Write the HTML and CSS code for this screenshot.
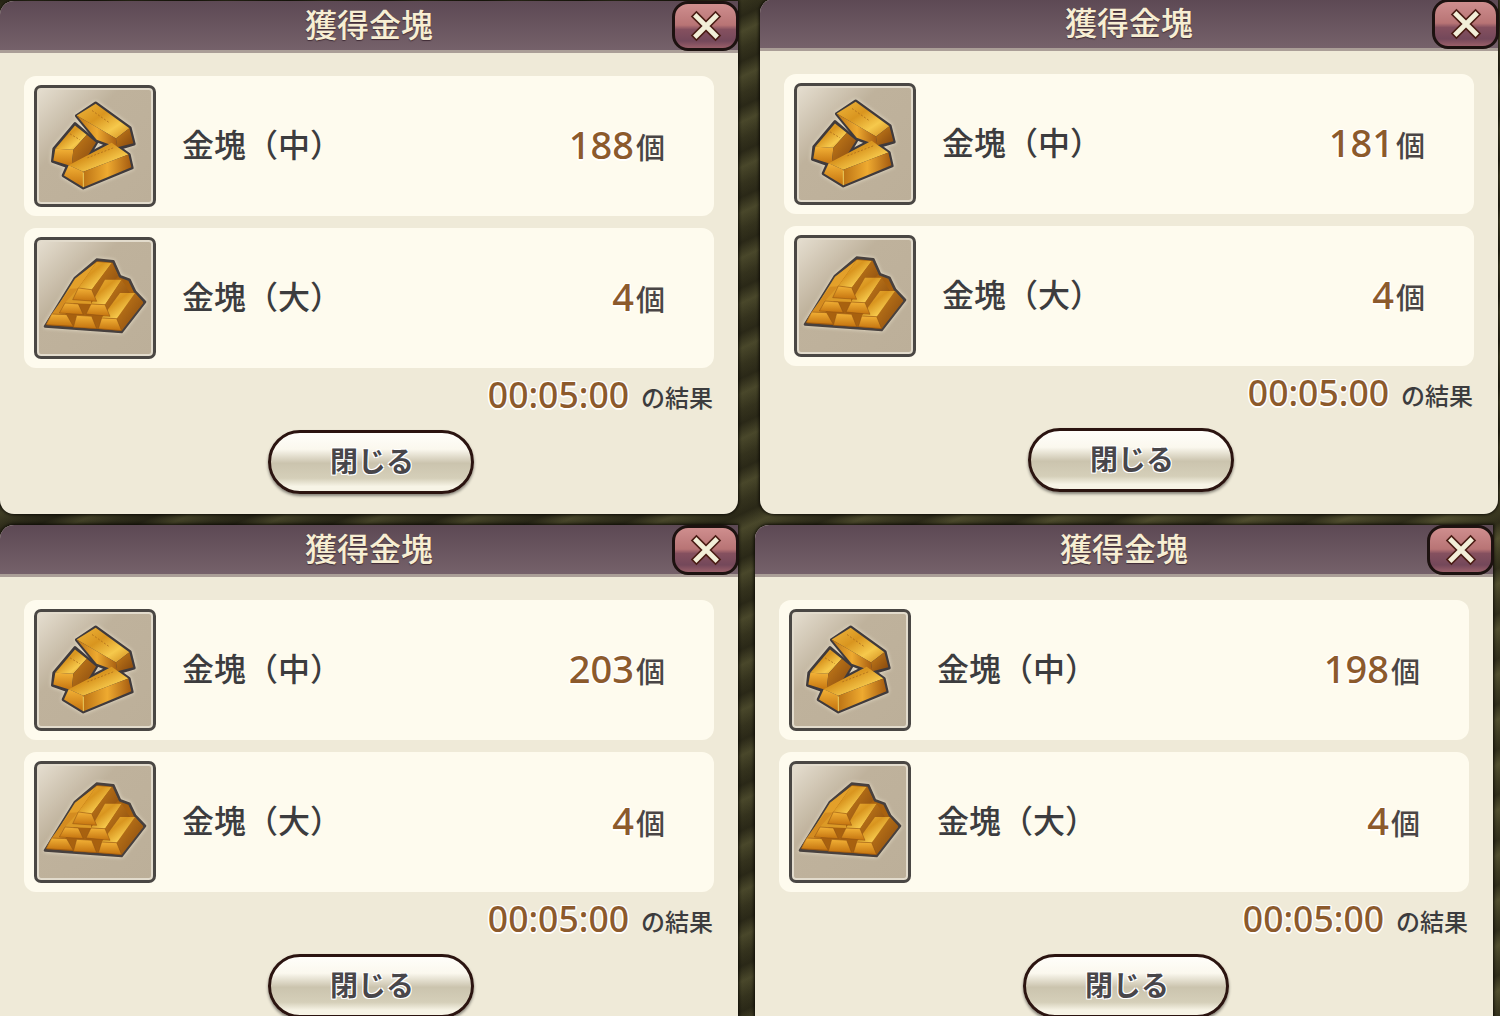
FILE: index.html
```html
<!DOCTYPE html>
<html lang="ja">
<head>
<meta charset="utf-8">
<title>獲得金塊</title>
<link rel="stylesheet" href="styles.css">
</head>
<body>
<svg class="defs" width="0" height="0" aria-hidden="true">
  <defs>
    <linearGradient id="gTop" x1="0" y1="0" x2="1" y2="1">
      <stop offset="0" stop-color="#efb63c"/><stop offset=".4" stop-color="#d9951f"/><stop offset=".7" stop-color="#f6c94c"/><stop offset="1" stop-color="#d08a1c"/>
    </linearGradient>
    <linearGradient id="gSide" x1="0" y1="0" x2="1" y2="0">
      <stop offset="0" stop-color="#bd7415"/><stop offset=".5" stop-color="#eeaa30"/><stop offset="1" stop-color="#a65c10"/>
    </linearGradient>
    <linearGradient id="gEnd" x1="0" y1="0" x2="0" y2="1">
      <stop offset="0" stop-color="#f2b136"/><stop offset="1" stop-color="#c4730f"/>
    </linearGradient>
    <linearGradient id="gDark" x1="0" y1="0" x2="1" y2="1">
      <stop offset="0" stop-color="#c87f1a"/><stop offset="1" stop-color="#84460e"/>
    </linearGradient>
    <symbol id="medium" viewBox="21 24 348 345">
      <g stroke-linejoin="round">
        <path d="M135 130 170 160 200 185 172 232 125 262 68 242 72 205Z" fill="#3f3a3c" stroke="#3f3a3c" stroke-width="10"/>
        <path d="M197 68 300 142 312 190 262 205 200 180 140 106Z" fill="#3f3a3c" stroke="#3f3a3c" stroke-width="10"/>
        <path d="M245 185 297 222 306 262 160 322 100 285 115 252Z" fill="#3f3a3c" stroke="#3f3a3c" stroke-width="10"/>
        <path d="M135 135 170 163 130 208 76 205Z" fill="url(#gTop)"/>
        <path d="M76 205 130 208 125 257 70 240Z" fill="url(#gEnd)"/>
        <path d="M170 163 198 186 172 228 125 257 130 208Z" fill="url(#gDark)"/>
        <path d="M197 70 298 143 258 174 140 105Z" fill="url(#gTop)"/>
        <path d="M140 105 258 174 262 200 200 178Z" fill="url(#gSide)"/>
        <path d="M298 143 310 188 262 200 258 174Z" fill="url(#gDark)"/>
        <path d="M245 187 295 222 160 274 116 254Z" fill="url(#gTop)"/>
        <path d="M116 254 160 274 160 320 102 285Z" fill="url(#gEnd)"/>
        <path d="M160 274 295 222 304 260 160 320Z" fill="url(#gSide)"/>
        <path d="M172 232 250 202M186 90 240 128M120 160 150 178" stroke="#a9691a" stroke-width="3" fill="none" stroke-dasharray="6 5" opacity=".75"/>
        <path d="M160 276V320" stroke="#ffe36b" stroke-width="2.5"/>
      </g>
    </symbol>
    <symbol id="large" viewBox="51 47 348 346">
      <g stroke-linejoin="round">
        <path d="M230 105 280 110 300 155 328 165 345 200 375 232 305 322 75 305 165 160Z" fill="#a8610f" stroke="#47403e" stroke-width="8"/>
        <path d="M165 162 230 112 175 190 135 235 95 268 78 300Z" fill="#e3a02a"/>
        <path d="M95 268 150 192 195 190 135 270Z" fill="#d48c20"/>
        <path d="M175 190 230 112 275 115 215 195Z" fill="url(#gTop)"/>
        <path d="M215 195 275 115 295 155 230 230Z" fill="url(#gDark)"/>
        <path d="M135 235 175 190 215 195 213 238Z" fill="#dc9a26"/>
        <path d="M213 238 255 165 305 165 255 240Z" fill="url(#gTop)"/>
        <path d="M255 240 305 165 330 205 270 275Z" fill="url(#gDark)"/>
        <path d="M290 282 345 205 370 235 305 318Z" fill="url(#gDark)"/>
        <path d="M245 280 300 205 345 205 290 282Z" fill="url(#gTop)"/>
        <path d="M175 190 215 195 230 230 158 225Z" fill="url(#gEnd)" stroke="#8a4c10" stroke-width="1.5"/>
        <path d="M135 235 175 238 190 270 118 265Z" fill="url(#gEnd)" stroke="#8a4c10" stroke-width="1.5"/>
        <path d="M213 238 255 240 270 275 198 268Z" fill="url(#gEnd)" stroke="#8a4c10" stroke-width="1.5"/>
        <path d="M95 268 140 270 160 305 78 300Z" fill="url(#gEnd)" stroke="#8a4c10" stroke-width="1.5"/>
        <path d="M170 272 215 275 230 312 160 308Z" fill="url(#gEnd)" stroke="#8a4c10" stroke-width="1.5"/>
        <path d="M245 280 290 282 305 318 235 312Z" fill="url(#gEnd)" stroke="#8a4c10" stroke-width="1.5"/>
      </g>
    </symbol>
  </defs>
</svg>

<section class="panel panel-a">
  <header class="head"><h2 class="title">獲得金塊</h2><button class="close"><svg class="x" viewBox="0 0 32 32"><path class="x-o" d="M7 7 25 25M25 7 7 25"/><path class="x-i" d="M7 7 25 25M25 7 7 25"/></svg></button></header>
  <div class="body">
    <div class="row"><span class="slot"><svg class="gold"><use href="#medium"/></svg></span><span class="name">金塊（中）</span><span class="count"><b class="num">188</b>個</span></div>
    <div class="row"><span class="slot"><svg class="gold"><use href="#large"/></svg></span><span class="name">金塊（大）</span><span class="count"><b class="num">4</b>個</span></div>
    <p class="result"><b class="time">00:05:00</b><span class="suffix">の結果</span></p>
    <div class="foot"><button class="shut">閉じる</button></div>
  </div>
</section>

<section class="panel panel-b">
  <header class="head"><h2 class="title">獲得金塊</h2><button class="close"><svg class="x" viewBox="0 0 32 32"><path class="x-o" d="M7 7 25 25M25 7 7 25"/><path class="x-i" d="M7 7 25 25M25 7 7 25"/></svg></button></header>
  <div class="body">
    <div class="row"><span class="slot"><svg class="gold"><use href="#medium"/></svg></span><span class="name">金塊（中）</span><span class="count"><b class="num">181</b>個</span></div>
    <div class="row"><span class="slot"><svg class="gold"><use href="#large"/></svg></span><span class="name">金塊（大）</span><span class="count"><b class="num">4</b>個</span></div>
    <p class="result"><b class="time">00:05:00</b><span class="suffix">の結果</span></p>
    <div class="foot"><button class="shut">閉じる</button></div>
  </div>
</section>

<section class="panel panel-c">
  <header class="head"><h2 class="title">獲得金塊</h2><button class="close"><svg class="x" viewBox="0 0 32 32"><path class="x-o" d="M7 7 25 25M25 7 7 25"/><path class="x-i" d="M7 7 25 25M25 7 7 25"/></svg></button></header>
  <div class="body">
    <div class="row"><span class="slot"><svg class="gold"><use href="#medium"/></svg></span><span class="name">金塊（中）</span><span class="count"><b class="num">203</b>個</span></div>
    <div class="row"><span class="slot"><svg class="gold"><use href="#large"/></svg></span><span class="name">金塊（大）</span><span class="count"><b class="num">4</b>個</span></div>
    <p class="result"><b class="time">00:05:00</b><span class="suffix">の結果</span></p>
    <div class="foot"><button class="shut">閉じる</button></div>
  </div>
</section>

<section class="panel panel-d">
  <header class="head"><h2 class="title">獲得金塊</h2><button class="close"><svg class="x" viewBox="0 0 32 32"><path class="x-o" d="M7 7 25 25M25 7 7 25"/><path class="x-i" d="M7 7 25 25M25 7 7 25"/></svg></button></header>
  <div class="body">
    <div class="row"><span class="slot"><svg class="gold"><use href="#medium"/></svg></span><span class="name">金塊（中）</span><span class="count"><b class="num">198</b>個</span></div>
    <div class="row"><span class="slot"><svg class="gold"><use href="#large"/></svg></span><span class="name">金塊（大）</span><span class="count"><b class="num">4</b>個</span></div>
    <p class="result"><b class="time">00:05:00</b><span class="suffix">の結果</span></p>
    <div class="foot"><button class="shut">閉じる</button></div>
  </div>
</section>
</body>
</html>
```
FILE: styles.css
```css
* { box-sizing: border-box; }
html, body { height: 100%; }
body {
  margin: 0;
  position: relative;
  overflow: hidden;
  font-family: "Noto Sans CJK JP", "Noto Sans", sans-serif;
  background-color: #45432a;
  background-image:
    repeating-linear-gradient(155deg, rgba(20,18,8,.5) 0, rgba(90,88,50,.35) 14px, rgba(30,28,12,.35) 29px, rgba(20,18,8,.5) 41px),
    linear-gradient(90deg, rgba(0,0,0,.25), rgba(110,105,60,.2));
}
.defs { position: absolute; }
.panel {
  position: absolute;
  width: 738px;
  height: 513px;
  background: #efead8;
  border-radius: 14px 0 14px 14px;
  box-shadow: 0 0 3px 1px rgba(8,6,2,.85);
}
.panel-a { left: 0; top: 1px; }
.panel-b { left: 760px; top: -1px; height: 515px; }
.panel-c { left: 0; top: 525px; }
.panel-d { left: 755px; top: 525px; }
.head {
  position: relative;
  height: 52px;
  padding-bottom: 5px;
  border-radius: 14px 0 0 0;
  background: linear-gradient(#5d4954, #75616a);
  border-bottom: 3px solid #aa9e97;
  display: flex;
  align-items: center;
  justify-content: center;
}
.title {
  margin: 0;
  font-size: 32px;
  font-weight: 500;
  line-height: 1;
  color: #f7eed3;
  text-shadow: 0 1px 1px rgba(50,30,40,.8);
}
.close {
  position: absolute;
  right: -1px;
  top: 0;
  width: 67px;
  height: 50px;
  padding: 0;
  border: 3px solid #1d1210;
  border-radius: 16px;
  background: linear-gradient(#cf8e8e 0, #b87475 48%, #85505f 58%, #74485a 84%, #9a5f69 100%);
  display: flex;
  align-items: center;
  justify-content: center;
}
.x { width: 34px; height: 34px; }
.x-o { stroke: #4a1c14; stroke-width: 7.5; stroke-linecap: square; fill: none; }
.x-i { stroke: #f2efd8; stroke-width: 4.5; stroke-linecap: square; fill: none; }
.body { padding: 23px 24px 0; }
.row {
  display: flex;
  align-items: center;
  width: 690px;
  height: 140px;
  margin-bottom: 12px;
  padding: 0 49px 0 10px;
  background: #fefbee;
  border-radius: 12px;
}
.slot {
  flex: none;
  width: 122px;
  height: 122px;
  border: 3px solid #4a4744;
  border-radius: 7px;
  background: linear-gradient(135deg, #e6dfd1 0, #bfb29c 36%, #bcaf99 100%);
  box-shadow: inset 0 0 0 2px #e2dbcc;
  display: flex;
}
.gold { width: 100%; height: 100%; filter: drop-shadow(0 0 2px #e8e0cc); }
.name {
  margin-left: 26px;
  margin-bottom: 6px;
  font-size: 32px;
  font-weight: 500;
  color: #3c3c3e;
  white-space: nowrap;
}
.count {
  margin-left: auto;
  margin-bottom: 5px;
  display: flex;
  align-items: baseline;
  font-size: 29px;
  font-weight: 500;
  color: #4a4545;
  line-height: 1;
}
.num, .time {
  font-family: "Noto Sans", sans-serif;
  font-weight: 500;
  color: #8c5a2c;
  text-shadow: 1.5px 0 #fff, -1.5px 0 #fff, 0 1.5px #fff, 0 -1.5px #fff, 1px 1px #fff, -1px 1px #fff, 1px -1px #fff, -1px -1px #fff;
}
.num { font-size: 38px; margin-right: 2px; }
.result {
  margin: 0;
  width: 689px;
  height: 30px;
  display: flex;
  align-items: center;
  justify-content: flex-end;
}
.time { font-size: 35.5px; line-height: 1; }
.suffix { margin-left: 12px; font-size: 24px; font-weight: 500; color: #3c3c3e; padding-top: 3px; }
.foot { display: flex; justify-content: center; padding-left: 3px; margin-top: 20px; }
.shut {
  width: 206px;
  height: 64px;
  padding: 0 0 4px 3px;
  border: 3px solid #2b1410;
  border-radius: 32px;
  font-family: inherit;
  font-size: 28px;
  font-weight: 700;
  color: #48464a;
  background: linear-gradient(#fffefa 0, #fbf8ee 28%, #cbc4ae 52%, #d5cfb9 78%, #f7f4e6 92%);
  box-shadow: 0 2px 3px rgba(0,0,0,.45);
  text-shadow: 1px 1px #fff, -1px 1px #fff, 1px -1px #fff, -1px -1px #fff;
}
```
